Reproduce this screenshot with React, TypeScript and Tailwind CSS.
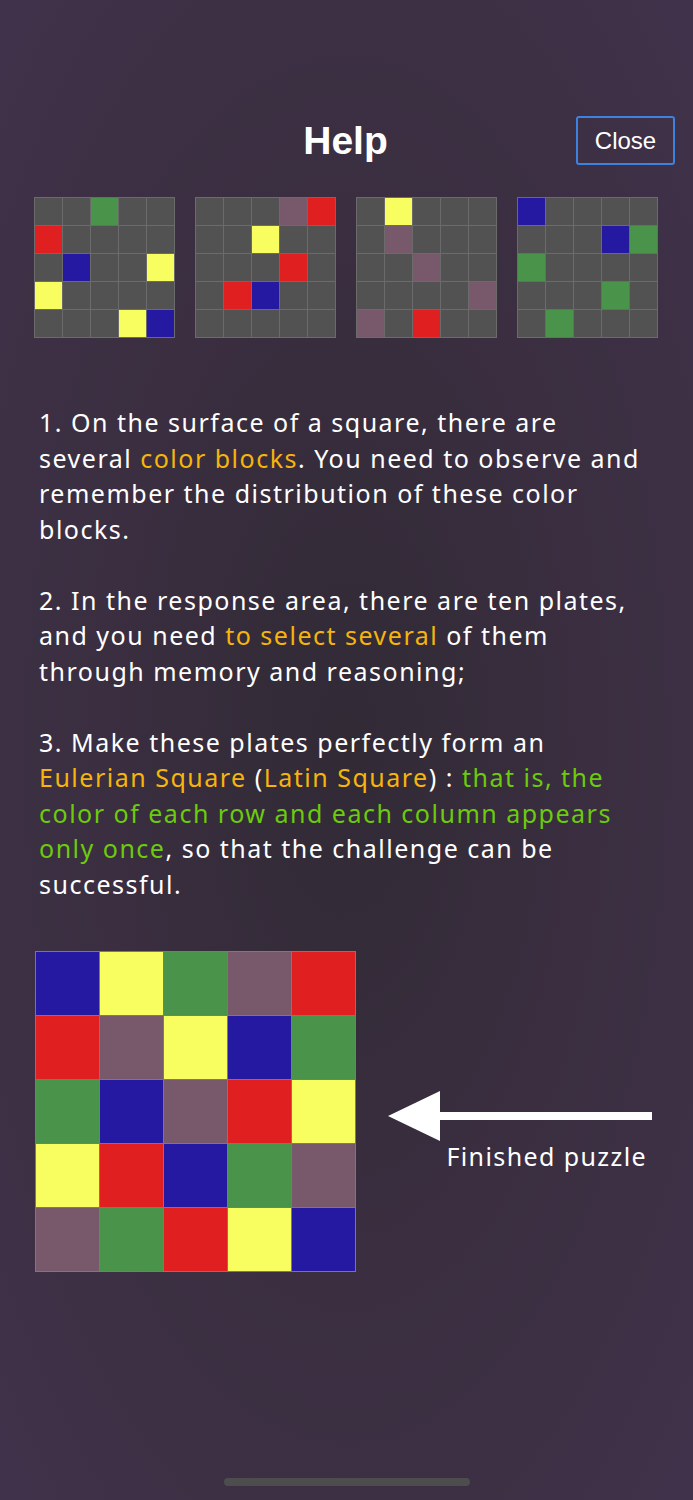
const C: Record<string, string> = {
  g: 'bg-[#525252]',
  B: 'bg-[#2419a0]',
  Y: 'bg-[#f9fe60]',
  G: 'bg-[#4a934a]',
  M: 'bg-[#77596b]',
  R: 'bg-[#e01f20]',
};

const smallGrids = [
  ['ggGgg', 'Rgggg', 'gBggY', 'Ygggg', 'gggYB'],
  ['gggMR', 'ggYgg', 'gggRg', 'gRBgg', 'ggggg'],
  ['gYggg', 'gMggg', 'ggMgg', 'ggggM', 'MgRgg'],
  ['Bgggg', 'gggBG', 'Ggggg', 'gggGg', 'gGggg'],
];

const finished = ['BYGMR', 'RMYBG', 'GBMRY', 'YRBGM', 'MGRYB'];

function SmallGrid({ rows }: { rows: string[] }) {
  return (
    <div className="grid grid-cols-5 gap-px p-px bg-[#6b6b6b]">
      {rows.join('').split('').map((c, i) => (
        <div key={i} className={`w-[27px] h-[27px] ${C[c]}`} />
      ))}
    </div>
  );
}

export default function App() {
  const font = { fontFamily: '"Noto Sans", "Liberation Sans", sans-serif' };
  return (
    <div className="min-h-[1500px] w-full bg-[radial-gradient(ellipse_at_center,#312a35_0%,#3a2e40_50%,#40324a_100%)] text-white relative">
      {/* header */}
      <div className="grid grid-cols-[1fr_auto_1fr] items-center pt-[116px] pr-[18px]">
        <div />
        <h1 className="text-[39px] font-bold leading-none pl-[16px]" style={{ fontFamily: '"Liberation Sans", Arial, sans-serif' }}>
          Help
        </h1>
        <div className="flex justify-end">
          <button
            className="w-[99px] h-[49px] border-2 border-[#3d82df] rounded-[3px] text-[24px] text-white"
            style={{ fontFamily: '"Liberation Sans", Arial, sans-serif' }}
          >
            Close
          </button>
        </div>
      </div>

      {/* examples */}
      <div className="flex gap-[20px] pl-[34px] mt-[32px]">
        {smallGrids.map((g, i) => (
          <SmallGrid key={i} rows={g} />
        ))}
      </div>

      {/* rules */}
      <div className="pl-[39px] mt-[67px] text-[25px] leading-[35.5px] tracking-[1.5px] whitespace-nowrap space-y-[35.5px]" style={font}>
        <p>
          1. On the surface of a square, there are<br />
          several <span className="text-[#f5b50c]">color blocks</span>. You need to observe and<br />
          remember the distribution of these color<br />
          blocks.
        </p>
        <p>
          2. In the response area, there are ten plates,<br />
          and you need <span className="text-[#f5b50c]">to select several</span> of them<br />
          through memory and reasoning;
        </p>
        <p>
          3. Make these plates perfectly form an<br />
          <span className="text-[#f5b50c]">Eulerian Square</span> (<span className="text-[#f5b50c]">Latin Square</span>) : <span className="text-[#6bcb0c]">that is, the<br />
          color of each row and each column appears<br />
          only once</span>, so that the challenge can be<br />
          successful.
        </p>
      </div>

      {/* finished */}
      <div className="flex items-center pl-[35px] mt-[49px]">
        <div className="grid grid-cols-5 gap-px p-px bg-[#7a7a7a]">
          {finished.join('').split('').map((c, i) => (
            <div key={i} className={`w-[63px] h-[63px] ${C[c]}`} />
          ))}
        </div>
        <div className="flex flex-col items-end ml-[32px] mt-[36px]">
          <svg width="266" height="52" viewBox="0 0 266 52">
            <polygon points="0,26 52,1 52,22 264,22 264,30 52,30 52,51" fill="#ffffff" />
          </svg>
          <div className="text-[25px] leading-none tracking-[1.4px] mt-[2px] pr-[7px]" style={font}>
            Finished puzzle
          </div>
        </div>
      </div>

      {/* home indicator */}
      <div className="absolute left-[224px] bottom-[14px] w-[246px] h-[8px] rounded-full bg-[#4d4d4d]" />
    </div>
  );
}
